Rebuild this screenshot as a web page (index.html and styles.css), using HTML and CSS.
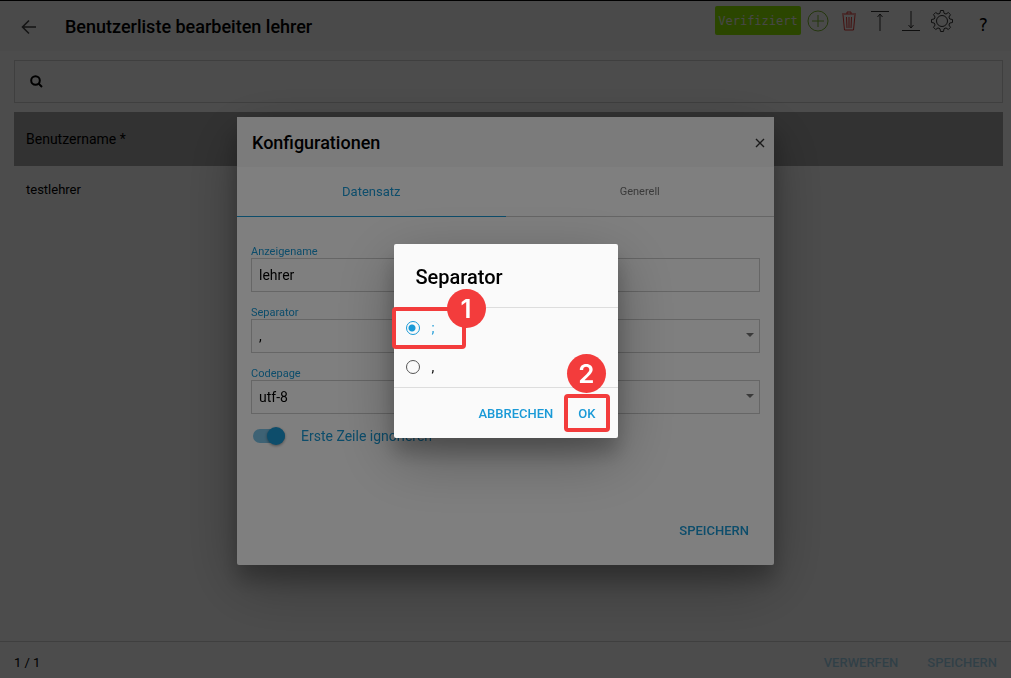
FILE: index.html
```html
<!DOCTYPE html>
<html lang="de">
<head>
    <meta charset="UTF-8">
    <meta name="viewport" content="width=device-width, initial-scale=1.0">
    <title>Benutzerliste bearbeiten</title>
    <link rel="stylesheet" href="styles.css">
</head>
<body>
<div class="page">
    <!-- Toolbar -->
    <header class="toolbar">
        <button type="button" class="icon-button back" aria-label="Zurück">
            <svg width="16" height="16" viewBox="0 0 16 16"><path d="M15 8H2M8 1.500L1.500 8L8 14.500"/></svg>
        </button>
        <h1>Benutzerliste bearbeiten lehrer</h1>
        <div class="actions">
            <button type="button" class="verified">Verifiziert</button>
            <button type="button" class="icon-button add" aria-label="Hinzufügen">
                <svg width="22" height="22" viewBox="0 0 22 22"><circle cx="11" cy="11" r="10"/><path d="M11 5v12M5 11h12"/></svg>
            </button>
            <button type="button" class="icon-button delete" aria-label="Löschen">
                <svg width="22" height="22" viewBox="0 0 22 22"><path d="M4 4h14M9 4V2h4v2M5 5l1.500 15h9L17 5M8.500 7l.5 11M11 7v11M13.500 7L13 18"/></svg>
            </button>
            <button type="button" class="icon-button" aria-label="Hochladen">
                <svg width="22" height="22" viewBox="0 0 22 22"><path d="M2 1.500h18M11 21V4M8.500 7L11 4l2.500 3"/></svg>
            </button>
            <button type="button" class="icon-button" aria-label="Herunterladen">
                <svg width="22" height="22" viewBox="0 0 22 22"><path d="M2 20.500h18M11 1v17M8.500 15l2.500 3l2.500-3"/></svg>
            </button>
            <button type="button" class="icon-button" aria-label="Einstellungen">
                <svg width="22" height="22" viewBox="0 0 22 22"><circle cx="11" cy="11" r="5.500"/><path d="M9.500.5h3l.5 2.700l2 .9l2.300-1.600l2.200 2.200L17.900 7l.9 2l2.700.5v3l-2.700.5l-.9 2l1.600 2.300l-2.200 2.200L15 17.900l-2 .9l-.5 2.700h-3L9 18.800l-2-.9l-2.300 1.600l-2.200-2.200L4.100 15l-.9-2l-2.700-.5v-3L3.200 9l.9-2L2.500 4.700l2.200-2.200L7 4.100l2-.9z"/></svg>
            </button>
            <button type="button" class="help" aria-label="Hilfe">?</button>
        </div>
    </header>

    <!-- User list -->
    <main class="content">
        <label class="search">
            <svg width="13" height="13" viewBox="0 0 13 13"><circle cx="5.500" cy="5.500" r="4.300"/><path d="M8.500 8.500L12 12"/></svg>
            <input type="search" aria-label="Suche">
        </label>
        <table class="users">
            <thead>
            <tr><th>Benutzername *</th></tr>
            </thead>
            <tbody>
            <tr><td>testlehrer</td></tr>
            </tbody>
        </table>
    </main>

    <footer class="bottom-bar">
        <span class="count">1 / 1</span>
        <button type="button" class="text-button" disabled>VERWERFEN</button>
        <button type="button" class="text-button" disabled>SPEICHERN</button>
    </footer>
</div>

<!-- Configuration dialog -->
<div class="overlay">
    <form class="dialog config" role="dialog" aria-labelledby="configTitle">
        <div class="dialog-head">
            <h2 id="configTitle">Konfigurationen</h2>
            <button type="button" class="icon-button" aria-label="Schließen">
                <svg width="10" height="10" viewBox="0 0 10 10"><path d="M1 1l8 8M9 1L1 9"/></svg>
            </button>
        </div>
        <div class="tabs">
            <button type="button" class="tab active">Datensatz</button>
            <button type="button" class="tab">Generell</button>
        </div>
        <div class="fields">
            <div class="field">
                <label for="displayName">Anzeigename</label>
                <input type="text" id="displayName" value="lehrer">
            </div>
            <div class="field select">
                <label for="separator">Separator</label>
                <select id="separator">
                    <option>,</option>
                    <option>;</option>
                </select>
            </div>
            <div class="field select">
                <label for="codepage">Codepage</label>
                <select id="codepage">
                    <option>utf-8</option>
                </select>
            </div>
            <label class="switch">
                <input type="checkbox" checked>
                Erste Zeile ignorieren
            </label>
        </div>
        <div class="dialog-foot">
            <button type="button" class="text-button">SPEICHERN</button>
        </div>
    </form>
</div>

<!-- Separator selection -->
<div class="overlay dark">
    <form class="dialog picker" role="dialog" aria-labelledby="pickerTitle">
        <h2 id="pickerTitle">Separator</h2>
        <div class="options">
            <label class="option checked">
                <input type="radio" name="sep" checked>
                ;
                <span class="mark mark-option"><b class="badge">1</b></span>
            </label>
            <label class="option">
                <input type="radio" name="sep">
                ,
            </label>
        </div>
        <div class="picker-foot">
            <button type="button" class="text-button">ABBRECHEN</button>
            <button type="button" class="text-button ok">OK<span class="mark mark-ok"><b class="badge">2</b></span></button>
        </div>
    </form>
</div>
</body>
</html>
```
FILE: styles.css
```css
* {
    box-sizing: border-box;
}

body {
    margin: 0;
    font-family: Roboto, sans-serif;
    font-size: 14px;
    color: #000;
}

h1, h2 {
    margin: 0;
    font-size: 18px;
    font-weight: 500;
    line-height: 24px;
}

button, input, select {
    font-family: inherit;
    margin: 0;
}

button {
    padding: 0;
    border: none;
    background: none;
    cursor: pointer;
}

svg {
    display: block;
    fill: none;
    stroke: #333;
    stroke-width: 1;
}

.page {
    display: flex;
    flex-direction: column;
    min-height: 100vh;
    background-color: #fff;
}

/* Toolbar */
.toolbar {
    display: flex;
    align-items: center;
    height: 51px;
    padding: 2px 17px 0 21px;
    border-top: 1px solid #000;
    background-color: #f7f7f7;
}

.back {
    margin-right: 28px;
}

.back svg {
    stroke: #444;
    stroke-width: 1.600;
}

.actions {
    display: flex;
    align-items: center;
    gap: 9px;
    margin-left: auto;
    margin-bottom: 13px;
}

.verified {
    height: 29px;
    width: 86px;
    margin-right: -3px;
    border-radius: 2px;
    background-color: #8fea00;
    color: #eee;
    font-family: "DejaVu Sans Mono", monospace;
    font-size: 12px;
}

.add svg {
    stroke: #7cb82f;
}

.delete svg {
    stroke: #e53935;
}

.help {
    width: 22px;
    margin-left: 10px;
    padding-top: 9px;
    font-family: "DejaVu Sans Mono", monospace;
    font-size: 17px;
}

/* User list */
.content {
    flex: 1;
    padding: 9px 8px 0 14px;
}

.search {
    display: flex;
    align-items: center;
    height: 43px;
    padding: 0 15px;
    border: 1px solid #d4d4d4;
}

.search svg {
    stroke: #000;
    stroke-width: 2;
}

.search input {
    flex: 1;
    border: none;
    background: none;
}

.users {
    width: 100%;
    margin-top: 9px;
    border-collapse: collapse;
    text-align: left;
}

.users th {
    height: 54px;
    padding: 0 12px;
    background-color: #a8a8a8;
    font-weight: 400;
}

.users td {
    height: 47px;
    padding: 0 12px;
    font-size: 13px;
}

.bottom-bar {
    display: flex;
    align-items: center;
    gap: 29px;
    height: 37px;
    padding: 4px 14px 0;
    border-top: 1px solid #d4d4d4;
}

.count {
    flex: 1;
    font-size: 13px;
}

.text-button {
    color: #1a9ad7;
    font-size: 13px;
    font-weight: 500;
}

.text-button:disabled {
    opacity: 0.4;
}

/* Dialogs */
.overlay {
    position: fixed;
    inset: 0;
    display: flex;
    align-items: center;
    justify-content: center;
    padding-top: 4px;
    background-color: rgba(0, 0, 0, 0.4);
}

.overlay.dark {
    background-color: rgba(0, 0, 0, 0.5);
}

.dialog {
    max-width: 100%;
    border-radius: 2px;
    background-color: #fff;
    box-shadow: 0 19px 60px rgba(0, 0, 0, 0.3), 0 15px 20px rgba(0, 0, 0, 0.22);
}

.config {
    width: 537px;
}

.dialog-head {
    display: flex;
    align-items: center;
    justify-content: space-between;
    height: 50px;
    padding: 2px 9px 0 15px;
    background-color: #f7f7f7;
}

.tabs {
    display: flex;
}

.tab {
    flex: 1;
    height: 50px;
    border-bottom: 1px solid #ccc;
    color: #757575;
    font-size: 11px;
}

.dialog-head svg {
    stroke: #333;
    stroke-width: 1.400;
}

.tab.active {
    border-color: #1a9ad7;
    color: #1a9ad7;
    font-size: 13px;
}

.fields {
    display: flex;
    flex-direction: column;
    gap: 13px;
    padding: 27px 14px 0;
}

.field {
    position: relative;
    display: flex;
    flex-direction: column;
}

.field label {
    padding-top: 2px;
    color: #1a9ad7;
    font-size: 11px;
    line-height: 12px;
}

.field input, .field select {
    width: 100%;
    height: 34px;
    padding: 0 7px;
    border: 1px solid #ccc;
    border-radius: 0;
    background: none;
    color: #000;
    font-size: 14px;
    appearance: none;
}

.select::after {
    content: "";
    position: absolute;
    right: 6px;
    bottom: 16px;
    border: 4px solid transparent;
    border-top-color: #757575;
    border-bottom: none;
}

.switch {
    display: flex;
    align-items: center;
    gap: 16px;
    height: 18px;
    color: #1a9ad7;
}

.switch input {
    position: relative;
    width: 32px;
    height: 14px;
    margin-left: 2px;
    border-radius: 7px;
    background-color: #7cc4e8;
    appearance: none;
}

.switch input::after {
    content: "";
    position: absolute;
    top: -2px;
    right: 0;
    width: 18px;
    height: 18px;
    border-radius: 50%;
    background-color: #1a9ad7;
    box-shadow: 0 1px 3px rgba(0, 0, 0, 0.4);
}

.dialog-foot {
    display: flex;
    justify-content: flex-end;
    padding: 78px 25px 27px;
}

.picker {
    width: 224px;
    background-color: #fafafa;
}

.picker h2 {
    padding: 21px 22px 18px;
    font-size: 20px;
}

.options {
    padding-bottom: 1px;
    border: 1px solid #ddd;
    border-width: 1px 0;
}

.option {
    position: relative;
    display: flex;
    align-items: center;
    gap: 12px;
    height: 39px;
    padding-left: 12px;
}

.option.checked {
    color: #1a9ad7;
}

.option input {
    width: 14px;
    height: 14px;
    border: 1px solid #555;
    border-radius: 50%;
    appearance: none;
}

.option input:checked {
    border-color: #1a9ad7;
    background: radial-gradient(circle at 5px 6px, #1a9ad7 3px, transparent 4px);
}

.picker-foot {
    display: flex;
    align-items: center;
    justify-content: flex-end;
    gap: 25px;
    height: 50px;
    padding-right: 22px;
}

.ok {
    position: relative;
}

/* Step markers */
.mark {
    position: absolute;
    border: 4px solid #f33c3c;
    border-radius: 4px;
}

.mark-option {
    left: -2px;
    top: -1px;
    width: 74px;
    height: 42px;
}

.mark-ok {
    left: 50%;
    top: 50%;
    width: 46px;
    height: 38px;
    transform: translate(-50%, -50%);
}

.badge {
    position: absolute;
    width: 39px;
    height: 39px;
    border-radius: 50%;
    background-color: #f33c3c;
    color: #fff;
    font: 600 26px/39px Inter, sans-serif;
    text-align: center;
}

.mark-option .badge {
    right: -24px;
    top: -22px;
}

.mark-ok .badge {
    left: -1px;
    top: -44px;
}
```
